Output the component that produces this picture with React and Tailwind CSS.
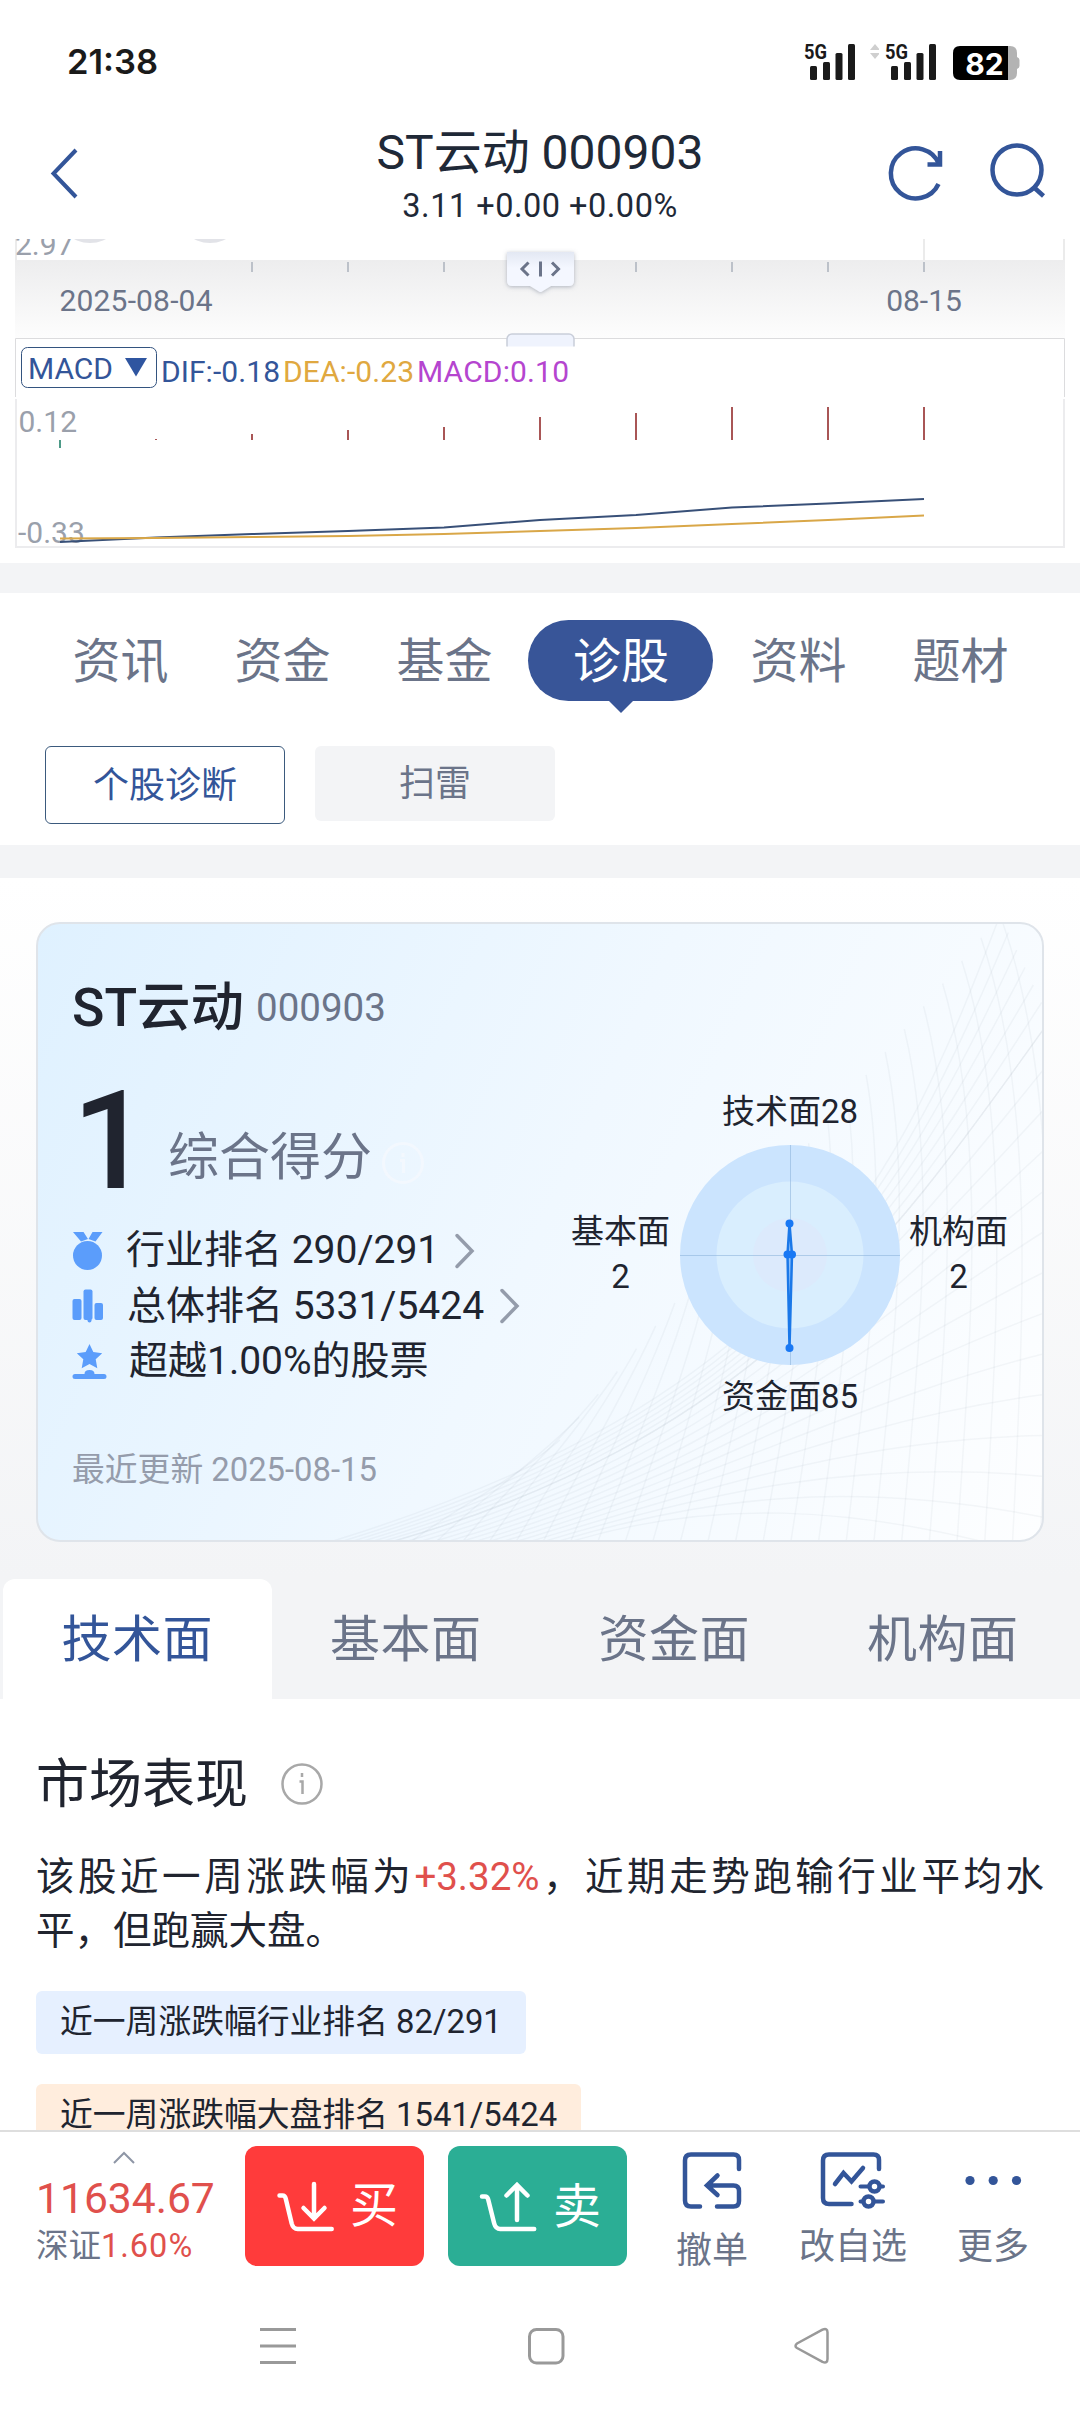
import { clsx } from 'clsx'

const navTabs = ['资讯', '资金', '基金', '诊股', '资料', '题材']
const aspects = ['技术面', '基本面', '资金面', '机构面']

export default function App() {
    return (
        <div className="flex h-[2412px] w-[1080px] flex-col overflow-hidden bg-white font-['Roboto','Noto_Sans_CJK_SC',sans-serif] text-[#20242f]">
            <StatusBar />
            <Header />
            <MacdChart />
            <div className="h-[30px] shrink-0 bg-[#f3f4f6]" />
            <NavTabs />
            <SubTabs />
            <div className="h-[33px] shrink-0 bg-[#f3f4f6]" />
            <div className="h-[701px] shrink-0 bg-linear-to-b from-white to-[#f3f4f6] pt-[44px] pl-[36px]">
                <ScoreCard />
            </div>
            <AspectTabs />
            <Market />
            <TradeBar />
            <SystemNav />
        </div>
    )
}

const Signal = () => (
    <svg className="h-[44px] w-[54px]" viewBox="803 38 54 44" fill="#1a1a1a">
        <text x="804" y="58.500" fontSize="20" fontWeight="700" textLength="23" lengthAdjust="spacingAndGlyphs">5G</text>
        <rect x="810" y="66" width="7" height="14" rx="1.5" />
        <rect x="823" y="62" width="7" height="18" rx="1.5" />
        <rect x="835.5" y="53" width="7" height="27" rx="1.5" />
        <rect x="848" y="44" width="7" height="36" rx="1.5" />
    </svg>
)

const StatusBar = () => (
    <div className="flex h-[120px] shrink-0 items-start pl-[67px]">
        <span className="mt-[42px] font-['Inter'] text-[34.5px] leading-[40px] font-semibold text-[#1a1a1a]">21:38</span>
        <div className="mt-[38px] ml-auto flex pr-[59px]">
            <Signal />
            <svg className="mx-[5px] h-[44px] w-[17px]" viewBox="861 38 17 44" fill="#cfcfcf">
                <path d="M869 50l5-6 5 6zM869 53h10l-5 6z" />
            </svg>
            <Signal />
            <svg className="ml-[14px] h-[44px] w-[69px]" viewBox="952 38 69 44">
                <path d="M1008 46h2q7 0 7 7v4q2.500 1 2.500 3v6q0 2-2.500 3v4q0 7-7 7h-2z" fill="#b3b3b3" />
                <path d="M1008 46v34h-48q-7 0-7-7V53q0-7 7-7z" fill="#000" />
                <text x="984.500" y="74.500" textAnchor="middle" fontSize="30" fontWeight="700" fill="#fff" fontFamily="Inter">82</text>
            </svg>
        </div>
    </div>
)

const Header = () => (
    <div className="flex h-[119px] shrink-0 items-start text-[#1f2937]">
        <svg className="ml-[48px] h-[110px] w-[152px]" viewBox="48 120 152 110" fill="none" stroke="#335599" strokeWidth="4">
            <path d="M76 150L53.500 173.500L76 197" />
        </svg>
        <div className="flex flex-1 flex-col items-center whitespace-nowrap">
            <h1 className="mt-[5px] text-[48px] leading-[56px]">ST云动 000903</h1>
            <p className="mt-[4px] text-[32.5px] leading-[42px] tracking-[0.500px]">3.11 +0.00 +0.00%</p>
        </div>
        <svg className="mr-[30px] h-[110px] w-[170px]" viewBox="880 120 170 110" fill="none" stroke="#335599" strokeWidth="4.500">
            <path d="M938.500 184A25 25 0 1 1 939 164" />
            <path d="M940 151v13.500h-12.500" />
            <circle cx="1017" cy="170" r="24.500" />
            <path d="M1033 186.500l10.500 9.500" />
        </svg>
    </div>
)

const xs = [60, 156, 252, 348, 444, 540, 636, 732, 828, 924]
const hist = [448, 439, 434, 430, 427, 417, 413, 407, 407, 407]
const dif = [542, 537.5, 534, 531, 527.5, 520, 515, 507.5, 503.5, 499]
const dea = [538.5, 538, 537, 536, 534, 531, 528, 524, 520, 515.5]
const toPoints = (ys) => ys.map((y, i) => `${xs[i]},${y}`).join(' ')

const MacdChart = () => (
    <svg className="h-[324px] w-[1080px] shrink-0" viewBox="0 239 1080 324" fontSize="30">
        <defs>
            <linearGradient id="axis" x1="0" y1="0" x2="0" y2="1">
                <stop offset="0" stopColor="#ededee" />
                <stop offset="1" stopColor="#fdfdfd" />
            </linearGradient>
            <linearGradient id="grip" x1="0" y1="0" x2="0" y2="1">
                <stop offset="0" stopColor="#e3e8f3" />
                <stop offset="0.4" stopColor="#f4f7ff" />
            </linearGradient>
            <filter id="gripShadow" x="-20%" y="-30%" width="140%" height="170%">
                <feDropShadow dx="0" dy="1" stdDeviation="2" floodColor="#6b7489" floodOpacity="0.5" />
            </filter>
            <clipPath id="gripClip"><rect x="495" y="320" width="90" height="26.500" /></clipPath>
        </defs>
        <path d="M16 239v21M924 239v21M1064 239v21" stroke="#ebebeb" strokeWidth="2" />
        <text x="15" y="254.500" fill="#9aa0ab">2.97</text>
        <circle cx="90" cy="209" r="34" fill="#e2e3e8" />
        <circle cx="210" cy="209" r="34" fill="#e2e3e8" />
        <rect x="15" y="260" width="1050" height="78" fill="url(#axis)" />
        {xs.slice(2).map((x) => <path key={x} d={`M${x} 262v10`} stroke="#bcc1c9" strokeWidth="2" />)}
        <g fill="#6b7489">
            <text x="59.500" y="311" textLength="153">2025-08-04</text>
            <text x="924" y="311" textAnchor="middle">08-15</text>
        </g>

        <path d="M15.500 397V338.500H1064.500V397" fill="none" stroke="#dcdcde" />
        <path d="M16 399V547H1064V399" fill="none" stroke="#ececee" strokeWidth="2" />

        <g filter="url(#gripShadow)">
            <path d="M507 252h67v29q0 5-5 5h-18l-9 5.500q-1.500 1-3 0l-9-5.500h-18q-5 0-5-5z" fill="url(#grip)" />
        </g>
        <g clipPath="url(#gripClip)">
            <rect x="507" y="334" width="67" height="30" rx="5" fill="#eff3fd" stroke="#c9ced9" strokeWidth="1.500" />
        </g>
        <path d="M528.500 262.500l-6.500 6.500 6.500 6.500M552 262.500l6.500 6.500-6.500 6.500M540.500 261.500v15" fill="none" stroke="#6b7489" strokeWidth="3" />

        <rect x="21.500" y="347.500" width="135" height="40" rx="6" fill="#fff" stroke="#33537f" />
        <text x="28" y="379" fill="#335599" textLength="85">MACD</text>
        <path d="M125 358h22l-11 18.500z" fill="#2f55a0" />
        <text x="161" y="382" fill="#335599" textLength="119">DIF:-0.18</text>
        <text x="283" y="382" fill="#e0a840" textLength="131">DEA:-0.23</text>
        <text x="417" y="382" fill="#b545cf" textLength="152">MACD:0.10</text>

        <g fill="#9aa0ab">
            <text x="18.500" y="432">0.12</text>
            <text x="18" y="542.500">-0.33</text>
        </g>
        {xs.map((x, i) => (
            <path key={x} d={`M${x} 440V${hist[i]}`} stroke={i === 0 ? '#4d9a88' : '#a95656'} strokeWidth="2" />
        ))}
        <polyline points={toPoints(dif)} fill="none" stroke="#385078" strokeWidth="2" />
        <polyline points={toPoints(dea)} fill="none" stroke="#d9a748" strokeWidth="2" />
    </svg>
)

const NavTabs = () => (
    <div className="flex h-[153px] shrink-0 items-start pt-[27px] pl-[39px] text-[48px] leading-[81px] text-[#6b7489]">
        {navTabs.map((tab) => {
            const active = tab === '诊股'
            return (
                <div
                    key={tab}
                    className={clsx('flex flex-col items-center', active ? 'mr-[4px] ml-[3px] w-[185px] text-white' : 'w-[162px]')}
                >
                    <span className={clsx('h-[81px] w-full pl-px text-center leading-[83px]', active && 'rounded-full bg-[#385598]')}>{tab}</span>
                    {active && (
                        <svg className="-mt-px h-[13px] w-[26px]" viewBox="0 0 26 13" fill="#385598">
                            <path d="M0 0h26L13 13z" />
                        </svg>
                    )}
                </div>
            )
        })}
    </div>
)

const SubTabs = () => (
    <div className="flex h-[99px] shrink-0 items-start gap-[30px] pl-[45px] text-center text-[36px]">
        <div className="h-[78px] w-[240px] rounded-[6px] border border-[#3b5a7d] leading-[78px] text-[#335599]">个股诊断</div>
        <div className="h-[75px] w-[240px] rounded-[6px] bg-[#f3f4f6] leading-[77px] text-[#6b7489]">扫雷</div>
    </div>
)

// wavy net in the card corner: two families of curves blended between an outer and an inner edge
const lerp = (a, b, t) => a + (b - a) * t
const blend = (from, to, n) =>
    Array.from({ length: n }, (_, i) => {
        const p = from.map((v, k) => lerp(v, to[k], i / (n - 1)).toFixed(1))
        return `M${p[0]} ${p[1]}C${p[2]} ${p[3]} ${p[4]} ${p[5]} ${p[6]} ${p[7]}`
    })
const net = [
    ...blend([320, 1545, 800, 1400, 900, 1180, 1000, 915], [380, 1545, 760, 1440, 900, 1230, 1050, 1020], 7),
    ...blend([380, 1545, 760, 1440, 900, 1230, 1050, 1020], [560, 1545, 700, 1500, 850, 1500, 1050, 1560], 14),
    ...blend([1000, 915, 1060, 1080, 1050, 1300, 1040, 1550], [560, 1440, 500, 1490, 450, 1510, 400, 1550], 24),
]

const ScoreCard = () => (
    <div className="relative h-[620px] w-[1008px] overflow-hidden rounded-[24px] border-2 border-[#dfe4ea] bg-linear-[115deg] from-[#dff1ff] via-[#f0f8ff] via-50% to-[#fdfeff]">
        <svg className="absolute -top-[2px] -left-[2px] h-[620px] w-[1008px]" viewBox="36 922 1008 620" fill="none" stroke="#8a94a0" strokeOpacity="0.08" strokeWidth="1.500">
            {net.map((d, i) => <path key={i} d={d} />)}
        </svg>
        <Radar />
        <div className="relative pt-[54px] pl-[34px]">
            <div className="flex h-[60px] items-center">
                <span className="text-[53.5px] leading-[60px] font-medium">ST云动</span>
                <span className="ml-[12px] text-[38.5px] leading-[60px] text-[#6b7489]">000903</span>
            </div>
            <div className="mt-[43px] flex h-[120px]">
                <span className="w-[96px] text-[138px] leading-[120px] font-medium">1</span>
                <span className="mt-[52px] text-[51px] leading-[50px] text-[#6b7489]">综合得分</span>
                <svg className="mt-[61px] ml-[10px] h-[42px] w-[42px]" viewBox="0 0 42 42" fill="none" stroke="#f3f8fe" strokeWidth="3">
                    <circle cx="21" cy="21" r="19.500" />
                    <path d="M21 11v4M18 18.500h3.500V31" />
                </svg>
            </div>
            <div className="mt-[22px] text-[39px] leading-[55.5px]">
                <div className="flex items-center">
                    <svg className="mr-[23px] h-[40px] w-[31px]" viewBox="72 1231 31 40" fill="#5b9dfb">
                        <circle cx="87.500" cy="1255.500" r="14.500" />
                        <path d="M73 1232h10.500l4.500 7-7 2.500zM102.500 1232H92.500l-4 7 7 2.500z" />
                    </svg>
                    行业排名 290/291
                    <Arrow />
                </div>
                <div className="flex items-center">
                    <svg className="mr-[24px] h-[40px] w-[31px]" viewBox="72 1284 31 40" fill="#5b9dfb">
                        <rect x="72.500" y="1297" width="9" height="21" rx="2" />
                        <rect x="83.500" y="1287.500" width="9" height="30.500" rx="2" />
                        <rect x="94.500" y="1301" width="8.500" height="17" rx="2" />
                        <circle cx="89.500" cy="1318.500" r="2" />
                    </svg>
                    总体排名 5331/5424
                    <Arrow />
                </div>
                <div className="flex items-center">
                    <svg className="mr-[22px] h-[40px] w-[35px]" viewBox="72 1341 35 40" fill="#5b9dfb">
                        <path d="M89.500 1343l3.800 8 8.900 1.200-6.500 6.100 1.600 9-7.800-4.300-7.800 4.300 1.600-9-6.500-6.100 8.900-1.200z" />
                        <path d="M75 1373h9.500q0-4 5-4t5 4h9.500q2.500 0 2.500 2.500t-2.500 2.500h-29q-2.500 0-2.500-2.500t2.500-2.500z" />
                    </svg>
                    超越1.00%的股票
                </div>
            </div>
            <p className="mt-[60px] text-[32.8px] leading-[40px] text-[#959cab]">最近更新 2025-08-15</p>
        </div>
    </div>
)

const Arrow = () => (
    <svg className="ml-[15px] h-[36px] w-[22px]" viewBox="0 0 22 36" fill="none" stroke="#949cab" strokeWidth="3.500" strokeLinecap="round">
        <path d="M3 2.500L18 18L3 33.500" />
    </svg>
)

const Radar = () => (
    <svg className="absolute top-[158px] left-[522px] h-[350px] w-[464px]" viewBox="560 1082 464 350" fontSize="33" fill="#20242f" textAnchor="middle">
        <circle cx="790" cy="1255" r="110" fill="#cbe4fe" />
        <circle cx="790" cy="1255" r="73.500" fill="#d9eefe" />
        <circle cx="790" cy="1255" r="37" fill="#dceafc" />
        <path d="M790.500 1145v220M680 1255.500h220" stroke="#8fb6dc" strokeOpacity="0.6" />
        <path d="M789.500 1223.500l2.500 31-2.500 93.500-2-93.500z" fill="#8cc0fb" stroke="#1b78e8" strokeWidth="2.500" />
        <g fill="#1978f4">
            <circle cx="789.500" cy="1223.500" r="4" />
            <circle cx="787.500" cy="1254.500" r="4" />
            <circle cx="792" cy="1254.500" r="4" />
            <circle cx="789.500" cy="1348" r="4" />
        </g>
        <text x="790" y="1122.500">技术面28</text>
        <text x="620.500" y="1243">基本面</text>
        <text x="620.500" y="1288">2</text>
        <text x="958.500" y="1243">机构面</text>
        <text x="958.500" y="1288">2</text>
        <text x="790" y="1407.500">资金面85</text>
    </svg>
)

const AspectTabs = () => (
    <div className="flex h-[120px] shrink-0 bg-[#f3f4f6] px-[3px] text-center text-[50px] leading-[122px] tracking-[0.5px] text-[#6b7489]">
        {aspects.map((name, i) => (
            <div key={name} className={clsx('flex-1', i === 0 && 'rounded-t-[12px] bg-white text-[#335599]')}>{name}</div>
        ))}
    </div>
)

const Market = () => (
    <div className="h-[431px] shrink-0 overflow-hidden px-[36px]">
        <div className="mt-[54px] flex h-[64px] items-center">
            <h2 className="text-[53px] leading-[64px]">市场表现</h2>
            <svg className="-mt-[2px] ml-[33px] h-[42px] w-[42px]" viewBox="0 0 42 42" fill="none" stroke="#a8a8a8" strokeWidth="2.500">
                <circle cx="21" cy="21" r="19.500" />
                <path d="M21 10v4M18.500 18.500h3V31" />
            </svg>
        </div>
        <p className="mt-[33px] text-justify text-[38.5px] leading-[54px]">
            该股近一周涨跌幅为<span className="text-[#e0504c]">+3.32%</span>，近期走势跑输行业平均水平，但跑赢大盘。
        </p>
        <div className="mt-[33px] flex flex-col items-start gap-[30px] text-[32.8px] leading-[63px]">
            <span className="rounded-[6px] bg-[#e6f0ff] px-[24px]">近一周涨跌幅行业排名 82/291</span>
            <span className="rounded-[6px] bg-[#ffeddd] px-[24px]">近一周涨跌幅大盘排名 1541/5424</span>
        </div>
    </div>
)

const TradeBar = () => (
    <div className="flex h-[150px] shrink-0 border-t-2 border-[#dedede] bg-white text-[#6b7489]">
        <div className="w-[245px] pl-[36px]">
            <svg className="mt-[19px] ml-[77px] h-[14px] w-[22px]" viewBox="0 0 22 14" fill="none" stroke="#8e96a6" strokeWidth="2">
                <path d="M1 12L11 2l10 10" />
            </svg>
            <p className="mt-[11px] text-[42.6px] leading-[44px] text-[#e0504c]">11634.67</p>
            <p className="mt-[4px] text-[32.5px] leading-[44px]">深证<span className="tracking-[1px] text-[#e0504c]">1.60%</span></p>
        </div>
        <div className="mt-[14px] flex h-[120px] w-[179px] items-center rounded-[12px] bg-[#ff3b3b] pl-[30px] text-[48px] text-white">
            <svg className="mr-[14px] h-[54px] w-[61px]" viewBox="275 2177 61 54" fill="none" stroke="#fff" strokeWidth="4.500" strokeLinecap="round">
                <path d="M279.500 2193.500h3q2.500 0 3.200 3l6 25q1.500 5.500 6 5.500h34M314 2182v34M303.500 2206l10.500 10.500 10.500-10.500" />
            </svg>
            买
        </div>
        <div className="mt-[14px] ml-[24px] flex h-[120px] w-[179px] items-center rounded-[12px] bg-[#2bae95] pl-[30px] text-[48px] text-white">
            <svg className="mr-[14px] h-[54px] w-[61px]" viewBox="478 2177 61 54" fill="none" stroke="#fff" strokeWidth="4.500" strokeLinecap="round">
                <path d="M482 2194.500h3q2.500 0 3.200 3l6 24q1.500 5.500 6 5.500h34M517 2218v-34M506.500 2193.500l10.500-10.500 10.500 10.500" />
            </svg>
            <span className="mt-[2px]">卖</span>
        </div>
        <div className="ml-[25px] flex w-[120px] flex-col items-center text-[36px] leading-[44px]">
            <svg className="mt-[18px] h-[62px] w-[64px]" viewBox="680 2150 64 62" fill="none" stroke="#335599" strokeWidth="4.500" strokeLinecap="round">
                <path d="M739 2169v-9q0-5.500-5.500-5.500h-42.500q-6 0-6 6v40q0 6 6 6h9M717 2206.500h16.500q5.500 0 5.500-5.500v-10q0-5.500-5.500-5.500h-26M717.500 2175.500l-10.500 10 10.500 9.500" />
            </svg>
            <span className="mt-[17px]">撤单</span>
        </div>
        <div className="ml-[21px] flex w-[120px] flex-col items-center text-[36px] leading-[44px]">
            <svg className="mt-[18px] h-[62px] w-[68px]" viewBox="819 2150 68 62" fill="none" stroke="#335599" strokeWidth="4.500" strokeLinecap="round">
                <path d="M879 2169v-9q0-5.500-5.500-5.500h-44.500q-6 0-6 6v37.500q0 6 6 6h22.500M835 2184l8.500-11 8 8.500 11.500-13.500" />
                <path d="M860.500 2186.500h8.500M881 2186.500h2M860.500 2201.500h2.500M874 2201.500h9" strokeWidth="4" />
                <circle cx="874.500" cy="2186.500" r="5" />
                <circle cx="868.500" cy="2201.500" r="5" />
            </svg>
            <span className="mt-[13px]">改自选</span>
        </div>
        <div className="ml-[20px] flex w-[120px] flex-col items-center text-[36px] leading-[44px]">
            <svg className="mt-[18px] h-[62px] w-[60px]" viewBox="963 2150 60 62" fill="#335599">
                <circle cx="970" cy="2180.500" r="4.600" />
                <circle cx="993.200" cy="2180.500" r="4.600" />
                <circle cx="1016.500" cy="2180.500" r="4.600" />
            </svg>
            <span className="mt-[13px]">更多</span>
        </div>
    </div>
)

const SystemNav = () => (
    <div className="flex h-[132px] shrink-0 items-start gap-[228px] pt-[44px] pl-[258px]">
        <svg className="h-[44px] w-[40px]" viewBox="258 2324 40 44" stroke="#999" strokeWidth="3">
            <path d="M260 2329.500h36M260 2346h36M260 2362.500h36" />
        </svg>
        <svg className="h-[44px] w-[40px]" viewBox="526 2324 40 44" fill="none" stroke="#999" strokeWidth="3">
            <rect x="529.500" y="2329.500" width="33.500" height="33.500" rx="7" />
        </svg>
        <svg className="h-[44px] w-[40px]" viewBox="794 2324 40 44" fill="none" stroke="#999" strokeWidth="2.500" strokeLinejoin="round">
            <path d="M797 2343.500q-3 2.500 0 4.500l25.500 13.800q5 2 5-2.800v-26.500q0-5-5-2.800z" />
        </svg>
    </div>
)
